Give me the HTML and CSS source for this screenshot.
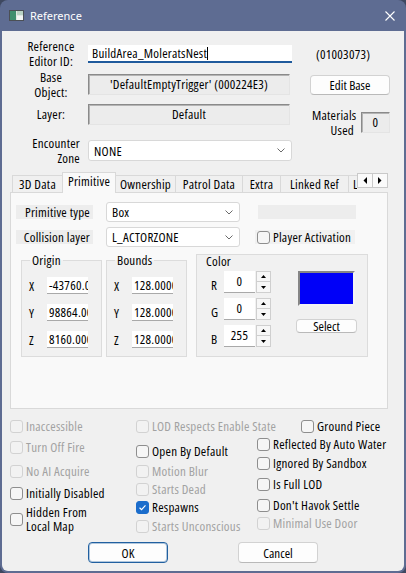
FILE: index.html
```html
<!DOCTYPE html>
<html lang="en">
<head>
<meta charset="utf-8">
<title>Reference</title>
<link rel="stylesheet" href="styles.css">
</head>
<body>
<div class="window">
  <div class="titlebar">
    <svg class="app-icon" viewBox="0 0 15 11" aria-hidden="true">
      <rect x="0.5" y="0.5" width="14" height="10" fill="#dfe8e2" stroke="#4b4f55"/>
      <rect x="1" y="1" width="6" height="9" fill="#3f8f6e"/>
      <rect x="8" y="1" width="6" height="4" fill="#b9d3c4"/>
      <rect x="8" y="6" width="6" height="4" fill="#f2f5f3"/>
    </svg>
    <span class="title">Reference</span>
    <svg class="close" viewBox="0 0 10 10" aria-hidden="true">
      <path d="M0.5 0.5 L9.5 9.5 M9.5 0.5 L0.5 9.5" stroke="#fff" stroke-width="1.1" fill="none"/>
    </svg>
  </div>

  <div class="client">
    <div class="row row-id">
      <div class="lbl">Reference<br>Editor ID:</div>
      <div class="edit-id">BuildArea_MoleratsNest<span class="caret"></span></div>
      <div class="formid">(01003073)</div>
    </div>

    <div class="row row-base">
      <div class="lbl">Base<br>Object:</div>
      <div class="sunken">'DefaultEmptyTrigger' (000224E3)</div>
      <button class="btn edit-base">Edit Base</button>
    </div>

    <div class="row row-layer">
      <div class="lbl">Layer:</div>
      <div class="sunken">Default</div>
      <div class="materials">
        <div class="mat-lbl">Materials<br>Used</div>
        <div class="mat-box">0</div>
      </div>
    </div>

    <div class="row row-zone">
      <div class="lbl lbl-right">Encounter<br>Zone</div>
      <div class="combo combo-zone">
        <span>NONE</span>
        <svg class="chev" viewBox="0 0 8 5" aria-hidden="true"><polyline points="0.5,0.5 4,4 7.5,0.5" fill="none" stroke="#6a6a6a" stroke-width="1"/></svg>
      </div>
    </div>

    <div class="tabview">
      <div class="tabstrip">
        <div class="tabs">
          <div class="tab t-3d">3D Data</div>
          <div class="tab t-prim active">Primitive</div>
          <div class="tab t-own">Ownership</div>
          <div class="tab t-patrol">Patrol Data</div>
          <div class="tab t-extra">Extra</div>
          <div class="tab t-linked">Linked Ref</div>
          <div class="tab t-loc">Location</div>
        </div>
        <div class="tab-arrows">
          <div class="tarrow"><svg viewBox="0 0 4 7" aria-hidden="true"><polygon points="4,0 4,7 0.5,3.5" fill="#000"/></svg></div>
          <div class="tarrow"><svg viewBox="0 0 4 7" aria-hidden="true"><polygon points="0,0 0,7 3.5,3.5" fill="#000"/></svg></div>
        </div>
      </div>

      <div class="panel">
        <div class="prow">
          <div class="plabel">Primitive type</div>
          <div class="combo pcombo">
            <span>Box</span>
            <svg class="chev" viewBox="0 0 8 5" aria-hidden="true"><polyline points="0.5,0.5 4,4 7.5,0.5" fill="none" stroke="#6a6a6a" stroke-width="1"/></svg>
          </div>
          <div class="pblank"></div>
        </div>
        <div class="prow">
          <div class="plabel">Collision layer</div>
          <div class="combo pcombo">
            <span>L_ACTORZONE</span>
            <svg class="chev" viewBox="0 0 8 5" aria-hidden="true"><polyline points="0.5,0.5 4,4 7.5,0.5" fill="none" stroke="#6a6a6a" stroke-width="1"/></svg>
          </div>
          <div class="pcheck"><span class="box"></span>Player Activation</div>
        </div>

        <div class="groups">
          <fieldset class="grp">
            <legend>Origin</legend>
            <div class="grp-body">
              <div class="xyz-row"><span class="axis">X</span><div class="num">-43760.00</div></div>
              <div class="xyz-row"><span class="axis">Y</span><div class="num">98864.00</div></div>
              <div class="xyz-row"><span class="axis">Z</span><div class="num">8160.000</div></div>
            </div>
          </fieldset>
          <fieldset class="grp grp-bounds">
            <legend>Bounds</legend>
            <div class="grp-body">
              <div class="xyz-row"><span class="axis">X</span><div class="num">128.0000</div></div>
              <div class="xyz-row"><span class="axis">Y</span><div class="num">128.0000</div></div>
              <div class="xyz-row"><span class="axis">Z</span><div class="num">128.0000</div></div>
            </div>
          </fieldset>
          <div class="color-box">
            <div class="color-title">Color</div>
            <div class="color-body">
              <div class="spins">
                <div class="spin-row">
                  <span class="chan">R</span><div class="spin-val">0</div>
                  <div class="spin-btns">
                    <div class="sb"><svg viewBox="0 0 5 3" aria-hidden="true"><polygon points="0,3 5,3 2.5,0" fill="#000"/></svg></div>
                    <div class="sb"><svg viewBox="0 0 5 3" aria-hidden="true"><polygon points="0,0 5,0 2.5,3" fill="#000"/></svg></div>
                  </div>
                </div>
                <div class="spin-row">
                  <span class="chan">G</span><div class="spin-val">0</div>
                  <div class="spin-btns">
                    <div class="sb"><svg viewBox="0 0 5 3" aria-hidden="true"><polygon points="0,3 5,3 2.5,0" fill="#000"/></svg></div>
                    <div class="sb"><svg viewBox="0 0 5 3" aria-hidden="true"><polygon points="0,0 5,0 2.5,3" fill="#000"/></svg></div>
                  </div>
                </div>
                <div class="spin-row">
                  <span class="chan">B</span><div class="spin-val">255</div>
                  <div class="spin-btns">
                    <div class="sb"><svg viewBox="0 0 5 3" aria-hidden="true"><polygon points="0,3 5,3 2.5,0" fill="#000"/></svg></div>
                    <div class="sb"><svg viewBox="0 0 5 3" aria-hidden="true"><polygon points="0,0 5,0 2.5,3" fill="#000"/></svg></div>
                  </div>
                </div>
              </div>
              <div class="swatch-col">
                <div class="swatch"></div>
                <button class="btn select-btn">Select</button>
              </div>
            </div>
          </div>
        </div>
      </div>
    </div>

    <div class="flags">
      <div class="fcol col1">
        <div class="cb off"><span class="box"></span>Inaccessible</div>
        <div class="cb off"><span class="box"></span>Turn Off Fire</div>
        <div class="cb off"><span class="box"></span>No AI Acquire</div>
        <div class="cb"><span class="box"></span>Initially Disabled</div>
        <div class="cb two"><span class="box"></span><span>Hidden From<br>Local Map</span></div>
      </div>
      <div class="fcol col2">
        <div class="cb off"><span class="box"></span>LOD Respects Enable State</div>
        <div class="cb"><span class="box"></span>Open By Default</div>
        <div class="cb off"><span class="box"></span>Motion Blur</div>
        <div class="cb off"><span class="box"></span>Starts Dead</div>
        <div class="cb"><span class="box checked"><svg viewBox="0 0 13 13" aria-hidden="true"><polyline points="3,6.8 5.4,9 10,4" fill="none" stroke="#fff" stroke-width="1.4"/></svg></span>Respawns</div>
        <div class="cb off"><span class="box"></span>Starts Unconscious</div>
      </div>
      <div class="fcol col3">
        <div class="cb ground"><span class="box"></span>Ground Piece</div>
        <div class="cb"><span class="box"></span>Reflected By Auto Water</div>
        <div class="cb"><span class="box"></span>Ignored By Sandbox</div>
        <div class="cb"><span class="box"></span>Is Full LOD</div>
        <div class="cb"><span class="box"></span>Don't Havok Settle</div>
        <div class="cb off"><span class="box"></span>Minimal Use Door</div>
      </div>
    </div>

    <div class="buttons">
      <button class="btn dlg-btn default">OK</button>
      <button class="btn dlg-btn">Cancel</button>
    </div>
  </div>
</div>
</body>
</html>
```

FILE: styles.css
```css
* { box-sizing: border-box; }

html, body { margin: 0; padding: 0; }

body {
  width: 406px;
  height: 573px;
  overflow: hidden;
  background: #3e4860;
  font-family: "Open Sans", "DejaVu Sans", sans-serif;
  font-stretch: 75%;
  font-size: 13px;
  letter-spacing: 0.25px;
  color: #000;
}

/* ---------- window frame ---------- */
.window {
  width: 406px;
  height: 573px;
  background: #5e6c92;
  border-radius: 8px;
  display: flex;
  flex-direction: column;
  overflow: hidden;
}

.titlebar {
  height: 31px;
  flex: none;
  display: flex;
  align-items: center;
  padding-left: 9px;
  color: #fff;
}

.app-icon { width: 15px; height: 11px; display: block; }

.title {
  font-family: "Noto Sans", "Open Sans", sans-serif;
  font-stretch: normal;
  letter-spacing: 0;
  font-size: 11px;
  margin-left: 6px;
}

.close {
  margin-left: auto;
  margin-right: 11px;
  width: 10px;
  height: 10px;
  display: block;
}

.client {
  flex: 1;
  margin: 0 2px 2px;
  background: #f0f0f0;
  border-radius: 0 0 6px 6px;
  padding-top: 8px;
}

/* ---------- header rows ---------- */
.row {
  display: flex;
  align-items: center;
  padding-left: 14px;
}
.row-id { height: 30px; }
.row-base { height: 31px; }
.row-layer { height: 29px; }
.row-zone { height: 43px; }

.lbl {
  width: 70px;
  text-align: center;
  line-height: 15px;
  flex: none;
}
.lbl-right { text-align: right; padding-right: 6px; }

.edit-id {
  margin-left: 2px;
  width: 204px;
  height: 18px;
  background: #fff;
  border-bottom: 2px solid #1f5a9c;
  padding-left: 4px;
  line-height: 16px;
  white-space: nowrap;
}
.caret {
  display: inline-block;
  width: 1px;
  height: 13px;
  background: #000;
  vertical-align: -2px;
}

.formid { margin-left: 24px; }

.sunken {
  margin-left: 2px;
  width: 202px;
  height: 21px;
  background: #ececec;
  border: 1px solid;
  border-color: #8a8a8a #e4e4e4 #e4e4e4 #8a8a8a;
  box-shadow: inset 1px 1px 0 #b4b4b4;
  text-align: center;
  line-height: 19px;
  white-space: nowrap;
}

.btn {
  font: inherit;
  color: #000;
  background: #fdfdfd;
  border: 1px solid #d2d2d2;
  border-bottom-color: #b9b9b9;
  border-radius: 4px;
  padding: 0;
}

.edit-base {
  margin-left: 20px;
  width: 80px;
  height: 20px;
}

.materials {
  align-self: flex-start;
  margin-top: 8px;
  margin-left: 22px;
  display: flex;
  align-items: flex-start;
}
.mat-lbl {
  width: 42px;
  text-align: right;
  line-height: 15px;
}
.mat-box {
  margin-left: 7px;
  margin-top: 4px;
  width: 29px;
  height: 21px;
  background: #ececec;
  border: 1px solid;
  border-color: #8a8a8a #e4e4e4 #e4e4e4 #8a8a8a;
  box-shadow: inset 1px 1px 0 #b4b4b4;
  text-align: center;
  line-height: 19px;
}

.combo {
  background: #fff;
  border: 1px solid #d8d8d8;
  border-radius: 3px;
  display: flex;
  align-items: center;
  padding: 0 6px 0 5px;
  white-space: nowrap;
}
.combo .chev { margin-left: auto; width: 8px; height: 5px; display: block; }

.combo-zone {
  margin-left: 2px;
  width: 204px;
  height: 21px;
}

/* ---------- tab control ---------- */
.tabview {
  margin-left: 8px;
  width: 378px;
}

.tabstrip {
  display: flex;
  height: 20px;
  padding-left: 2px;
}

.tabs {
  flex: 1;
  display: flex;
  align-items: flex-end;
  height: 21px;
  margin-bottom: -1px;
  overflow: hidden;
  position: relative;
  z-index: 1;
}

.tab {
  flex: none;
  height: 17px;
  margin-bottom: 1px;
  margin-right: -1px;
  border: 1px solid #d9d9d9;
  border-bottom: none;
  background: #f0f0f0;
  text-align: center;
  line-height: 16px;
  white-space: nowrap;
}
.t-3d { width: 51px; }
.t-prim { width: 54px; }
.t-own { width: 61px; }
.t-patrol { width: 68px; }
.t-extra { width: 39px; }
.t-linked { width: 69px; }
.t-loc { width: 60px; text-align: left; padding-left: 4px; }

.tab.active {
  height: 21px;
  margin-bottom: 0;
  background: #f9f9f9;
  line-height: 17px;
  position: relative;
  z-index: 2;
}

.tab-arrows {
  flex: none;
  width: 31px;
  height: 15px;
  margin-top: 1px;
  display: flex;
}
.tarrow {
  width: 16px;
  height: 15px;
  margin-right: -1px;
  border: 1px solid #c9c9c9;
  background: #fafafa;
  display: flex;
  align-items: center;
  justify-content: center;
}
.tarrow svg { width: 4px; height: 7px; display: block; }

.panel {
  height: 217px;
  background: #f9f9f9;
  border: 1px solid #d9d9d9;
  padding: 9px 0 0 5px;
}

.prow {
  display: flex;
  align-items: center;
  height: 20px;
}
.prow + .prow { margin-top: 5px; }

.plabel {
  width: 77px;
  height: 14px;
  background: #ededed;
  text-align: right;
  padding-right: 3px;
  line-height: 14px;
  white-space: nowrap;
}

.pcombo {
  margin-left: 13px;
  width: 134px;
  height: 20px;
}

.pblank {
  margin-left: 18px;
  width: 98px;
  height: 14px;
  background: #ededed;
}

.pcheck {
  margin-left: 15px;
  width: 100px;
  height: 14px;
  background: #f1f1f1;
  display: flex;
  align-items: center;
  padding-left: 2px;
  white-space: nowrap;
}

/* ---------- group boxes ---------- */
.groups {
  display: flex;
  margin: 6px 0 0 5px;
  height: 104px;
}

.grp {
  width: 81px;
  margin: 0;
  padding: 0;
  min-width: 0;
  border: 1px solid #dcdcdc;
  background: #f1f1f1;
}
.grp legend {
  padding: 0 2px;
  margin-left: 8px;
  line-height: 15px;
}
.grp-bounds { margin-left: 4px; }

.grp-body { padding: 9px 0 0 7px; }

.xyz-row {
  display: flex;
  align-items: center;
  height: 17px;
}
.xyz-row + .xyz-row { margin-top: 10px; }

.axis { width: 18px; flex: none; }

.num {
  width: 41px;
  height: 17px;
  background: #fff;
  border-bottom: 1px solid #a9a9a9;
  padding-left: 2px;
  overflow: hidden;
  white-space: nowrap;
  line-height: 16px;
}

/* color picker box: caption sits inside the frame */
.color-box {
  width: 172px;
  height: 103px;
  margin: 1px 0 0 9px;
  border: 1px solid #dcdcdc;
  background: #f1f1f1;
}
.color-title {
  padding-left: 9px;
  line-height: 13px;
}

.color-body {
  display: flex;
  margin-top: 3px;
  padding-left: 14px;
}

.spin-row {
  display: flex;
  height: 22px;
}
.spin-row + .spin-row { margin-top: 5px; }

.chan {
  width: 13px;
  align-self: flex-end;
  line-height: 15px;
}

.spin-val {
  width: 31px;
  height: 22px;
  background: #fff;
  border-bottom: 1px solid #a9a9a9;
  text-align: center;
  line-height: 20px;
}

.spin-btns {
  width: 15px;
  height: 22px;
  margin-left: 1px;
  display: flex;
  flex-direction: column;
  background: #fff;
}
.sb {
  height: 11px;
  border: 1px solid #cfcfcf;
  background: #f7f7f7;
  display: flex;
  align-items: center;
  justify-content: center;
}
.sb + .sb { margin-top: -1px; height: 12px; }
.sb svg { width: 5px; height: 3px; display: block; }

.swatch-col {
  margin-left: 25px;
  width: 61px;
  display: flex;
  flex-direction: column;
  align-items: center;
}
.swatch {
  width: 57px;
  height: 35px;
  background: #0000f8;
  border: 2px solid;
  border-color: #868686 #f4f4f4 #f4f4f4 #868686;
}
.select-btn {
  margin-top: 13px;
  width: 61px;
  height: 14px;
  line-height: 12px;
  border-radius: 4px;
}

/* ---------- flag checkboxes ---------- */
.flags {
  display: flex;
  height: 133px;
  padding-left: 8px;
}
.fcol { padding-top: 9px; }
.col1 { width: 126px; flex: none; }
.col2 { width: 121px; flex: none; }
.col3 { flex: 1; }

.cb {
  display: flex;
  align-items: center;
  height: 16px;
  line-height: 15px;
  white-space: nowrap;
}
.cb.two { height: 27px; line-height: 13.5px; }

.box {
  flex: none;
  width: 13px;
  height: 13px;
  margin-right: 3px;
  border: 1px solid #8e8e8e;
  border-radius: 3px;
  background: #f6f6f6;
}
.box.checked {
  border-color: #1b6dcc;
  background: #1b6dcc;
}
.box.checked svg { width: 11px; height: 11px; display: block; margin: 0; }

.cb.off { color: #a2a2a2; }
.cb.off .box { border-color: #d2d2d2; background: #f2f2f2; }

.col1 .cb:nth-child(2) { margin-top: 5px; }
.col1 .cb:nth-child(3) { margin-top: 8px; }
.col1 .cb:nth-child(4) { margin-top: 6px; }
.col1 .cb:nth-child(5) { margin-top: 5px; }

.col2 .cb:nth-child(2) { margin-top: 9px; }
.col2 .cb:nth-child(3) { margin-top: 4px; }
.col2 .cb:nth-child(4) { margin-top: 2px; }
.col2 .cb:nth-child(5) { margin-top: 2px; }
.col2 .cb:nth-child(6) { margin-top: 3px; }

.col3 .ground { margin-left: 44px; }
.col3 .cb:nth-child(2) { margin-top: 2px; }
.col3 .cb:nth-child(3) { margin-top: 3px; }
.col3 .cb:nth-child(4) { margin-top: 5px; }
.col3 .cb:nth-child(5) { margin-top: 5px; }
.col3 .cb:nth-child(6) { margin-top: 2px; }

/* ---------- dialog buttons ---------- */
.buttons {
  display: flex;
  gap: 70px;
  padding-left: 86px;
}
.dlg-btn {
  width: 80px;
  height: 21px;
}
.dlg-btn.default {
  border: 1px solid #2160a0;
  box-shadow: inset 0 0 0 1px rgba(33, 96, 160, 0.35);
}
```
